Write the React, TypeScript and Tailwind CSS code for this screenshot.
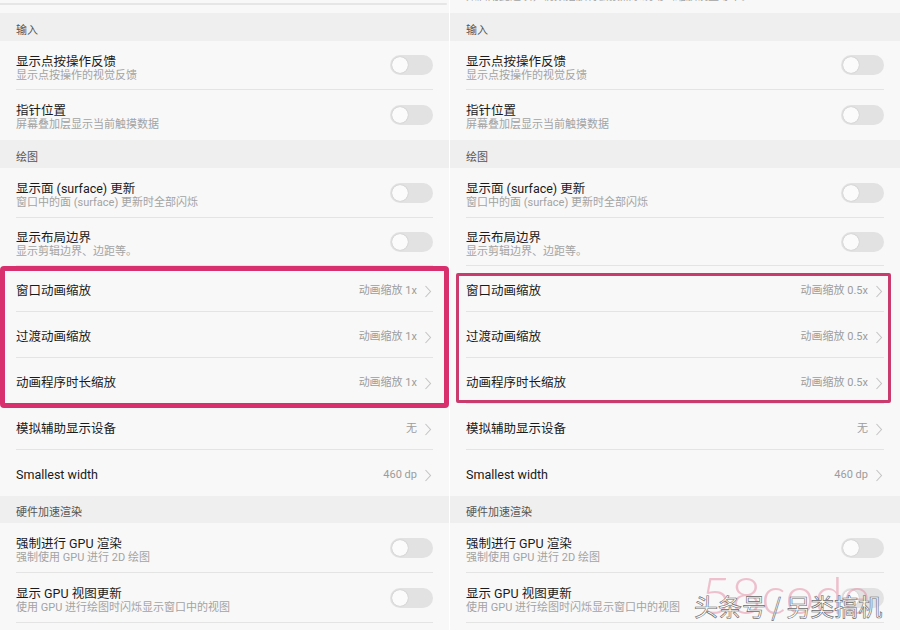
import React from "react";

const FONT = { fontFamily: 'Roboto, "Noto Sans CJK SC", "Noto Sans", sans-serif' };

const Toggle = () => (
  <div className="w-[43px] h-[20px] rounded-full bg-[#e2e2e2] flex items-center px-[2px] shrink-0">
    <div className="w-[16px] h-[16px] rounded-full bg-[#fbfbfb] shadow-[0_0_1px_rgba(0,0,0,0.3)]" />
  </div>
);

const Chevron = () => (
  <svg width="8" height="13" viewBox="0 0 8 13" className="shrink-0">
    <polyline points="1.5,1 6.5,6.5 1.5,12" fill="none" stroke="#c4c4c4" strokeWidth="1.1" />
  </svg>
);

const Header = ({ text, h }: { text: string; h: string }) => (
  <div className={`${h} bg-[#efefef] flex items-center pl-4 pt-[7px] text-[11px] leading-[14px] text-[#555]`}>
    {text}
  </div>
);

const ToggleRow = ({
  title,
  sub,
  h,
  divider,
}: {
  title: string;
  sub: string;
  h: string;
  divider?: boolean;
}) => (
  <div className={`${h} flex flex-col px-4`}>
    <div className="flex-1 flex items-center justify-between pt-[6px]">
      <div className="flex flex-col">
        <div className="text-[12.5px] leading-[15px] text-[#1a1a1a]">{title}</div>
        <div className="text-[11px] leading-[14px] text-[#a3a3a3]">{sub}</div>
      </div>
      <div className="-mt-[6px]">
        <Toggle />
      </div>
    </div>
    <div className={`h-px ${divider ? "bg-[#e4e4e4]" : "bg-transparent"}`} />
  </div>
);

const NavRow = ({
  title,
  value,
  divider,
}: {
  title: string;
  value: string;
  divider?: boolean;
}) => (
  <div className="h-[46px] flex flex-col px-4">
    <div className="flex-1 flex items-center justify-between pt-[5px]">
      <div className="text-[12.5px] text-[#1a1a1a]">{title}</div>
      <div className="flex items-center gap-[7px] pr-[1px]">
        <span className="text-[11px] text-[#9c9c9c]">{value}</span>
        <Chevron />
      </div>
    </div>
    <div className={`h-px ${divider ? "bg-[#e4e4e4]" : "bg-transparent"}`} />
  </div>
);

const Panel = ({ scale, right }: { scale: string; right?: boolean }) => (
  <div className={`${right ? "w-[450px]" : "w-[449px]"} h-[630px] bg-[#f8f8f8] flex flex-col overflow-hidden shrink-0`}>
    {right ? (
      <div className="h-[13px] overflow-hidden px-4">
        <div className="-mt-[10px] text-[11px] leading-[14px] text-[#a3a3a3]">
          如启用此选项，视频播放将会按照系统动画缩放设置等干。
        </div>
      </div>
    ) : (
      <div className="h-[13px] flex flex-col">
        <div className="h-[3px]" />
        <div className="h-[2px] bg-[#e6e6e6] mr-[2px] rounded-r-full" />
      </div>
    )}
    <Header text="输入" h="h-[28px]" />
    <ToggleRow title="显示点按操作反馈" sub="显示点按操作的视觉反馈" h="h-[49px]" divider />
    <ToggleRow title="指针位置" sub="屏幕叠加层显示当前触摸数据" h="h-[50px]" />
    <Header text="绘图" h="h-[28px]" />
    <ToggleRow title="显示面 (surface) 更新" sub="窗口中的面 (surface) 更新时全部闪烁" h="h-[50px]" divider />
    <ToggleRow title="显示布局边界" sub="显示剪辑边界、边距等。" h="h-[48px]" divider />
    <NavRow title="窗口动画缩放" value={`动画缩放 ${scale}`} divider />
    <NavRow title="过渡动画缩放" value={`动画缩放 ${scale}`} divider />
    <NavRow title="动画程序时长缩放" value={`动画缩放 ${scale}`} divider />
    <NavRow title="模拟辅助显示设备" value="无" divider />
    <NavRow title="Smallest width" value="460 dp" />
    <Header text="硬件加速渲染" h="h-[27px]" />
    <ToggleRow title="强制进行 GPU 渲染" sub="强制使用 GPU 进行 2D 绘图" h="h-[50px]" divider />
    <ToggleRow title="显示 GPU 视图更新" sub="使用 GPU 进行绘图时闪烁显示窗口中的视图" h="h-[50px]" divider />
  </div>
);

export default function App() {
  return (
    <div className="relative w-[900px] h-[630px] overflow-hidden bg-white flex" style={FONT}>
      <Panel scale="1x" />
      <div className="w-px shrink-0 bg-white" />
      <Panel scale="0.5x" right />

      {/* annotation boxes */}
      <div className="absolute left-0 top-[266px] w-[449px] h-[142px] border-[5px] border-[#d8306f] rounded-[4px]" />
      <div className="absolute left-[456px] top-[273px] w-[435px] h-[130px] border-[3px] border-[#c93a6d] rounded-[2px]" />

      {/* watermark */}
      <div
        className="absolute left-[701px] top-[568px] text-[52px] leading-none font-light text-[#e58aa5] opacity-50"
        style={{ fontFamily: 'Lato, "Noto Sans", sans-serif' }}
      >
        58code
      </div>
      <div
        className="absolute left-[694px] top-[594px] text-[24px] leading-none text-white [-webkit-text-stroke:0.6px_#666]"
        style={{ fontFamily: '"Noto Sans CJK SC", sans-serif' }}
      >
        头条号 / 另类搞机
      </div>
    </div>
  );
}
